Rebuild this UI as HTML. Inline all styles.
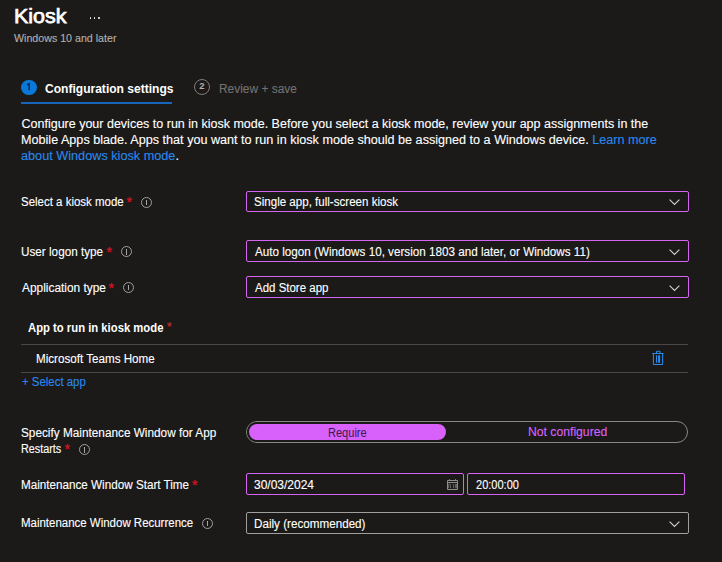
<!DOCTYPE html>
<html><head><meta charset="utf-8">
<style>
html,body{margin:0;padding:0;}
body{width:722px;height:562px;background:#1b1a19;overflow:hidden;position:relative;font-family:"Liberation Sans",sans-serif;color:#ffffff;font-size:12.5px;line-height:16px;}
.a{position:absolute;white-space:nowrap;transform-origin:0 0;-webkit-text-stroke:0.12px currentColor;}
.dot{position:absolute;top:16.7px;width:1.9px;height:1.9px;background:#ffffff;border-radius:50%;}
.step1c{position:absolute;left:21px;top:79.6px;width:15.6px;height:15.6px;border-radius:50%;background:#0a78d8;}
.step1c b{position:absolute;left:0;top:0;width:16px;line-height:16px;text-align:center;font-size:9px;color:#111;}
.uline{position:absolute;left:21px;top:102.4px;width:151px;height:1.6px;background:#1766bb;}
.step2c{position:absolute;left:194px;top:79px;width:14px;height:14px;border-radius:50%;border:1.2px solid #7f7d7b;}
.step2c b{position:absolute;left:0;top:-1px;width:14px;line-height:14px;text-align:center;font-size:9.5px;font-weight:bold;color:#b3b0ad;}
.link{color:#2a88ec;}
.req{position:absolute;color:#e5101f;font-size:14px;line-height:16px;-webkit-text-stroke:0.2px #e5101f;}
.info{position:absolute;box-sizing:border-box;width:11px;height:11px;border:1px solid #a19f9d;border-radius:50%;}
.info:after{content:"";position:absolute;left:4px;top:2px;width:1px;height:5.5px;background:#a8a6a4;}
.dd{position:absolute;box-sizing:border-box;border:1px solid #d664f2;border-radius:2px;}
.chev{position:absolute;width:12px;height:7px;}
.hr{position:absolute;height:1px;background:#4a4846;}

</style></head><body>
<div class="dot" style="left:89.6px"></div><div class="dot" style="left:93.6px"></div><div class="dot" style="left:97.7px"></div>
<div class="step1c"><svg width="16" height="16" viewBox="0 0 16 16" style="position:absolute;left:0;top:0"><path d="M6.1 4.9 L8.1 3.6 V10.3" fill="none" stroke="#0b1a33" stroke-width="1.2"/></svg></div>
<div class="uline"></div>
<div class="step2c"><b>2</b></div>

<div class="req" style="left:126.6px;top:194px">*</div>
<div class="info" style="left:141px;top:196.5px"></div>
<div class="dd" style="left:246px;top:191px;width:443px;height:21px"></div>
<svg class="chev" style="left:669px;top:199px" viewBox="0 0 12 7"><path d="M0.6 0.6 L5.5 5.5 L10.4 0.6" fill="none" stroke="#d2d0ce" stroke-width="1.1"/></svg>

<div class="req" style="left:106.5px;top:244px">*</div>
<div class="info" style="left:121px;top:246px"></div>
<div class="dd" style="left:246px;top:240px;width:443px;height:22px"></div>
<svg class="chev" style="left:669px;top:249px" viewBox="0 0 12 7"><path d="M0.6 0.6 L5.5 5.5 L10.4 0.6" fill="none" stroke="#d2d0ce" stroke-width="1.1"/></svg>

<div class="req" style="left:108.5px;top:280px">*</div>
<div class="info" style="left:123px;top:281.5px"></div>
<div class="dd" style="left:246px;top:276px;width:443px;height:22px"></div>
<svg class="chev" style="left:669px;top:285px" viewBox="0 0 12 7"><path d="M0.6 0.6 L5.5 5.5 L10.4 0.6" fill="none" stroke="#d2d0ce" stroke-width="1.1"/></svg>

<div class="req" style="left:167px;top:319px;font-size:12px;color:#c9282f;-webkit-text-stroke:0.2px #c9282f">*</div>
<div class="hr" style="left:21px;top:344px;width:667px"></div>
<svg style="position:absolute;left:646px;top:346px" width="24" height="24" viewBox="0 0 24 24"><path d="M10.5 7 V5.8 Q10.5 5.2 11.1 5.2 H13.4 Q14 5.2 14 5.8 V7 M6.3 7.5 H17.6 M7.4 7.5 V17.8 Q7.4 18.5 8.1 18.5 H15.9 Q16.6 18.5 16.6 17.8 V7.5 M10.5 9.3 V16.8 M12.6 9.3 V16.8 M13.6 9.3 V16.8" fill="none" stroke="#2b8ae6" stroke-width="1.05"/></svg>
<div class="hr" style="left:21px;top:372px;width:667px"></div>

<div class="req" style="left:64.5px;top:441px">*</div>
<div class="info" style="left:79px;top:444px"></div>
<div style="position:absolute;box-sizing:border-box;left:246px;top:421px;width:442px;height:22px;border:1px solid #8a8886;border-radius:11px"></div>
<div style="position:absolute;box-sizing:border-box;left:247px;top:422px;width:201px;height:20px;border:2px solid #1b1a19;border-radius:10px;background:#d860fb"></div>

<div class="req" style="left:192px;top:477px">*</div>
<div class="dd" style="left:246px;top:473px;width:218px;height:22px"></div>
<svg style="position:absolute;left:443px;top:476px" width="19" height="17" viewBox="0 0 19 17"><path d="M4.5 4.5 H14.5 V13.5 H4.5 Z M4.5 6.5 H14.5 M6.5 3.2 V4.5 M12.5 3.2 V4.5 " fill="none" stroke="#8f8d8b" stroke-width="1"/><path d="M5.6 12.2 V8.6 Q5.6 7.9 6.5 7.9 Q7.4 7.9 7.4 8.6 V12.2 M10.4 8 V12.2 M12.4 7.9 V11.5 Q12.4 12.2 13 12.2 Q13.6 12.2 13.6 11.5 V7.9" fill="none" stroke="#7d7b79" stroke-width="0.8"/></svg>
<div class="dd" style="left:467px;top:473px;width:218px;height:22px"></div>

<div class="info" style="left:202px;top:517.6px"></div>
<div class="dd" style="left:246px;top:512px;width:443px;height:22px;border-color:#a19f9d"></div>
<svg class="chev" style="left:669px;top:520.5px" viewBox="0 0 12 7"><path d="M0.6 0.6 L5.5 5.5 L10.4 0.6" fill="none" stroke="#d2d0ce" stroke-width="1.1"/></svg>

<div class="a" style="left:13.56px;top:2px;font-size:20.5px;line-height:28px;font-weight:normal;-webkit-text-stroke:0.75px #fff;transform:scaleX(1.0449)">Kiosk</div>
<div class="a" style="left:14.49px;top:30px;font-size:10.8px;color:#b3b0ad;transform:scaleX(0.9865)">Windows 10 and later</div>
<div class="a" style="left:45.1px;top:81px;font-weight:bold;-webkit-text-stroke:0;transform:scaleX(0.9636)">Configuration settings</div>
<div class="a" style="left:218.7px;top:81px;color:#737170;transform:scaleX(0.9543)">Review + save</div>
<div class="a" style="left:21.5px;top:116px;">Configure your devices to run in kiosk mode. Before you select a kiosk mode, review your app assignments in the</div>
<div class="a" style="left:21.0px;top:132px;;transform:scaleX(1.0087)">Mobile Apps blade. Apps that you want to run in kiosk mode should be assigned to a Windows device. <span class="link">Learn more</span></div>
<div class="a" style="left:21.0px;top:148px;;transform:scaleX(1.0149)"><span class="link">about Windows kiosk mode</span>.</div>
<div class="a" style="left:21.1px;top:194px;;transform:scaleX(0.918)">Select a kiosk mode</div>
<div class="a" style="left:254.2px;top:194px;;transform:scaleX(0.9252)">Single app, full-screen kiosk</div>
<div class="a" style="left:21.3px;top:244px;;transform:scaleX(0.9379)">User logon type</div>
<div class="a" style="left:254.93px;top:244px;;transform:scaleX(0.9346)">Auto logon (Windows 10, version 1803 and later, or Windows 11)</div>
<div class="a" style="left:21.95px;top:280px;;transform:scaleX(0.9511)">Application type</div>
<div class="a" style="left:254.92px;top:280px;;transform:scaleX(0.9188)">Add Store app</div>
<div class="a" style="left:28.4px;top:320px;font-weight:bold;-webkit-text-stroke:0;transform:scaleX(0.9027)">App to run in kiosk mode</div>
<div class="a" style="left:35.7px;top:351px;;transform:scaleX(0.9307)">Microsoft Teams Home</div>
<div class="a" style="left:22.0px;top:374px;color:#2a88ec;transform:scaleX(0.913)">+ Select app</div>
<div class="a" style="left:21.4px;top:425px;;transform:scaleX(0.9432)">Specify Maintenance Window for App</div>
<div class="a" style="left:21.4px;top:441px;;transform:scaleX(0.8652)">Restarts</div>
<div class="a" style="left:328.4px;top:425px;color:#301c48;-webkit-text-stroke:0;transform:scaleX(0.8837)">Require</div>
<div class="a" style="left:527.5px;top:424px;color:#d862f8;transform:scaleX(0.975)">Not configured</div>
<div class="a" style="left:21.4px;top:477px;;transform:scaleX(0.9341)">Maintenance Window Start Time</div>
<div class="a" style="left:254.3px;top:477px;;transform:scaleX(0.9597)">30/03/2024</div>
<div class="a" style="left:475.7px;top:477px;;transform:scaleX(0.8813)">20:00:00</div>
<div class="a" style="left:21.4px;top:515px;;transform:scaleX(0.9176)">Maintenance Window Recurrence</div>
<div class="a" style="left:254.4px;top:516px;;transform:scaleX(0.9331)">Daily (recommended)</div>
</body></html>
